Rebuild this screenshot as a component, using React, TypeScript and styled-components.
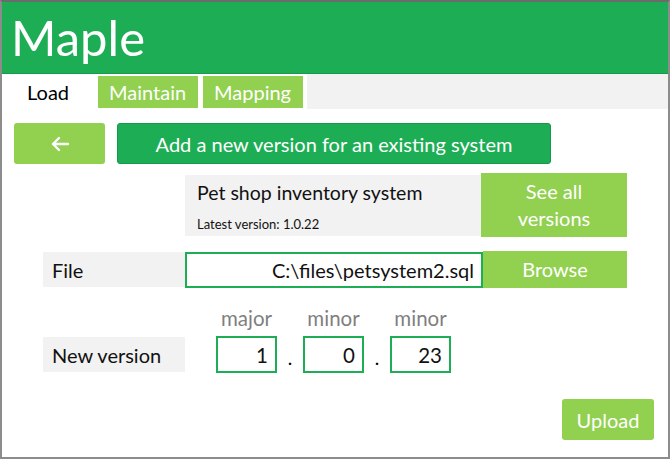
import React from "react";
import styled, { createGlobalStyle } from "styled-components";

const GREEN = "#1dae55";
const LIGHT = "#92d050";
const GRAY = "#f2f2f2";

const GlobalStyle = createGlobalStyle`
  body {
    margin: 0;
    font-family: Lato, "Open Sans", sans-serif;
    background: #fff;
  }
`;

const Frame = styled.div`
  width: 670px;
  height: 459px;
  box-sizing: border-box;
  border: 2px solid #8c8c8c;
  border-top-color: #6b6b6b;
  display: flex;
  flex-direction: column;
  position: relative;
`;

const Header = styled.div`
  height: 71px;
  background: ${GREEN};
  border-bottom: 1px solid #179a47;
  display: flex;
  align-items: center;
  padding-left: 9px;
`;

const Logo = styled.h1`
  margin: 0;
  color: #fff;
  font-weight: 400;
  font-size: 49px;
  line-height: 1;
  padding-bottom: 1px;
`;

const TabBar = styled.div`
  height: 35px;
  display: flex;
  align-items: stretch;
`;

const Tab = styled.div<{ $active?: boolean }>`
  width: ${(p) => (p.$active ? 95 : 100)}px;
  margin: 2px 0 1px;
  margin-right: ${(p) => (p.$active ? 1 : 5)}px;
  box-sizing: border-box;
  padding-left: ${(p) => (p.$active ? 25 : 11)}px;
  display: flex;
  align-items: center;
  font-size: 20px;
  color: ${(p) => (p.$active ? "#000" : "#fff")};
  background: ${(p) => (p.$active ? "#fff" : LIGHT)};
`;

const TabFill = styled.div`
  flex: 1;
  background: ${GRAY};
  margin-left: -1px;
`;

const Toolbar = styled.div`
  display: flex;
  gap: 12px;
  margin: 14px 0 0 12px;
`;

const BackButton = styled.div`
  width: 91px;
  height: 41px;
  border-radius: 3px;
  background: ${LIGHT};
  display: flex;
  align-items: center;
  justify-content: center;
`;

const TitleButton = styled.div`
  width: 434px;
  height: 41px;
  box-sizing: border-box;
  border: 1px solid #16974a;
  border-radius: 3px;
  background: ${GREEN};
  color: #fff;
  font-size: 20px;
  display: flex;
  align-items: center;
  justify-content: center;
  padding-top: 1px;
`;

const Row = styled.div<{ $top: number }>`
  display: flex;
  align-items: center;
  margin: ${(p) => p.$top}px 0 0 41px;
`;

const InfoBox = styled.div`
  margin-left: 142px;
  width: 296px;
  height: 61px;
  box-sizing: border-box;
  background: ${GRAY};
  padding: 6px 12px 0;
  display: flex;
  flex-direction: column;
`;

const SystemName = styled.div`
  font-size: 19.5px;
  color: #111;
`;

const LatestVersion = styled.div`
  font-size: 13px;
  color: #111;
  margin-top: 12px;
`;

const SideButton = styled.div<{ $h: number; $w: number }>`
  width: ${(p) => p.$w}px;
  height: ${(p) => p.$h}px;
  background: ${LIGHT};
  color: #fff;
  font-size: 20px;
  line-height: 27px;
  text-align: center;
  display: flex;
  align-items: center;
  justify-content: center;
`;

const Label = styled.div`
  width: 142px;
  height: 35px;
  box-sizing: border-box;
  background: ${GRAY};
  padding-left: 9px;
  font-size: 20px;
  display: flex;
  align-items: center;
  color: #111;
`;

const PathInput = styled.div`
  width: 298px;
  height: 36px;
  box-sizing: border-box;
  border: 2px solid ${GREEN};
  padding-right: 7px;
  font-size: 20px;
  display: flex;
  align-items: center;
  justify-content: flex-end;
  color: #111;
`;

const VersionArea = styled.div`
  display: grid;
  grid-template-columns: 61px 26px 61px 26px 61px;
  grid-template-rows: 26px 37px;
  margin-left: 31px;
  align-items: center;
`;

const PartLabel = styled.div`
  font-size: 20.5px;
  line-height: 22px;
  color: #7f7f7f;
  text-align: center;
  align-self: start;
  margin-top: -3px;
`;

const NumberBox = styled.div`
  height: 37px;
  box-sizing: border-box;
  border: 2px solid ${GREEN};
  padding-right: 7px;
  font-size: 20.5px;
  display: flex;
  align-items: center;
  justify-content: flex-end;
  color: #111;
`;

const Dot = styled.div`
  font-size: 19px;
  text-align: center;
  padding-top: 6px;
`;

const Footer = styled.div`
  display: flex;
  justify-content: flex-end;
  margin: 26px 14px 0 0;
`;

const UploadButton = styled.div`
  width: 92px;
  height: 41px;
  border-radius: 3px;
  background: ${LIGHT};
  color: #fff;
  font-size: 20px;
  display: flex;
  align-items: center;
  justify-content: center;
`;

const parts = [
  { name: "major", value: "1" },
  { name: "minor", value: "0" },
  { name: "minor", value: "23" },
];

export default function App() {
  return (
    <>
      <GlobalStyle />
      <Frame>
        <Header>
          <Logo>Maple</Logo>
        </Header>
        <TabBar>
          <Tab $active>Load</Tab>
          <Tab>Maintain</Tab>
          <Tab>Mapping</Tab>
          <TabFill />
        </TabBar>
        <Toolbar>
          <BackButton>
            <svg width="20" height="16" viewBox="0 0 20 16">
              <path
                d="M18 8H3M9 2L3 8l6 6"
                fill="none"
                stroke="#fff"
                strokeWidth="2.4"
                strokeLinecap="round"
                strokeLinejoin="round"
              />
            </svg>
          </BackButton>
          <TitleButton>Add a new version for an existing system</TitleButton>
        </Toolbar>
        <Row $top={9}>
          <InfoBox>
            <SystemName>Pet shop inventory system</SystemName>
            <LatestVersion>Latest version: 1.0.22</LatestVersion>
          </InfoBox>
          <SideButton $w={146} $h={64}>
            See all
            <br />
            versions
          </SideButton>
        </Row>
        <Row $top={14}>
          <Label>File</Label>
          <PathInput>C:\files\petsystem2.sql</PathInput>
          <SideButton $w={144} $h={37}>
            Browse
          </SideButton>
        </Row>
        <Row $top={22}>
          <Label style={{ alignSelf: "flex-end", marginBottom: 1 }}>New version</Label>
          <VersionArea>
            {parts.map((p, i) => (
              <PartLabel key={"l" + i} style={{ gridColumn: i * 2 + 1, gridRow: 1 }}>
                {p.name}
              </PartLabel>
            ))}
            {parts.map((p, i) => (
              <React.Fragment key={"b" + i}>
                <NumberBox style={{ gridColumn: i * 2 + 1, gridRow: 2 }}>{p.value}</NumberBox>
                {i < 2 && <Dot style={{ gridColumn: i * 2 + 2, gridRow: 2 }}>.</Dot>}
              </React.Fragment>
            ))}
          </VersionArea>
        </Row>
        <Footer>
          <UploadButton>Upload</UploadButton>
        </Footer>
      </Frame>
    </>
  );
}
